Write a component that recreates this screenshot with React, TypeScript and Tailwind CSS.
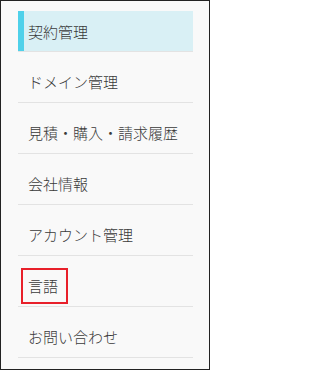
import React from 'react';

const items = [
    '契約管理',
    'ドメイン管理',
    '見積・購入・請求履歴',
    '会社情報',
    'アカウント管理',
    '言語',
    'お問い合わせ',
];

// Side menu: first entry is the current page, "言語" is outlined in red.
export default function App(): JSX.Element {
    return (
        <div
            className="w-[210px] h-[370px] border border-[#222] bg-[#f9f9f9] text-[#3a3a3a] text-[15px] leading-none font-light"
            style={{ fontFamily: '"Noto Sans CJK JP", "Noto Sans", sans-serif' }}
        >
            <ul className="ml-[17px] mr-[16px]">
                {items.map((label, i) => {
                    if (i === 0) {
                        return (
                            <li key={label} className="pt-[10px] border-b border-[#e3e3e3]">
                                <div className="h-[40px] flex items-center bg-[#d9f0f5] border-l-[6px] border-[#4fd1ea] pl-[4px]">
                                    {label}
                                </div>
                            </li>
                        );
                    }
                    return (
                        <li key={label} className="h-[51px] pt-[9px] border-b border-[#e3e3e3] flex items-center">
                            {label === '言語' ? (
                                <span className="ml-[3px] h-[36px] pl-[5px] pr-[8px] border-2 border-[#e8202a] inline-flex items-center">
                                    {label}
                                </span>
                            ) : (
                                <span className="pl-[10px]">{label}</span>
                            )}
                        </li>
                    );
                })}
            </ul>
        </div>
    );
}
